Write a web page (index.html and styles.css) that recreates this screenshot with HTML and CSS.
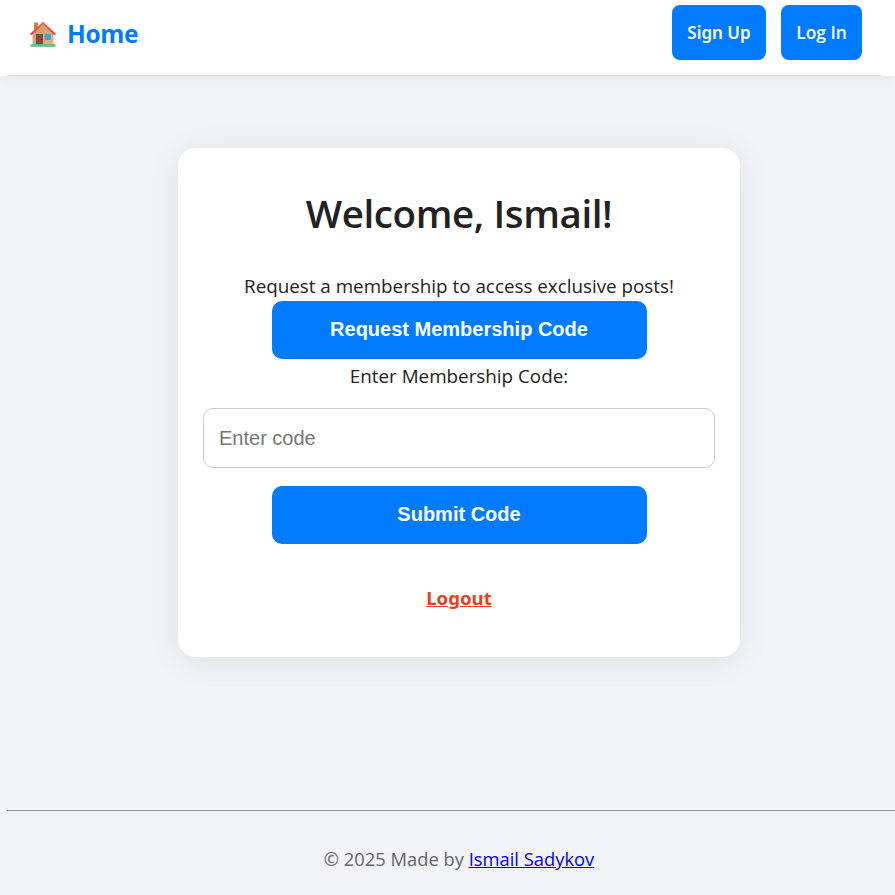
FILE: index.html
```html
<!DOCTYPE html>
<html lang="en">
<head>
<meta charset="utf-8">
<title>Members</title>
<link rel="stylesheet" href="styles.css">
</head>
<body>
<header class="header">
  <nav class="nav">
    <a class="home" href="#">
      <svg class="house" viewBox="0 0 28 28" aria-hidden="true">
        <defs>
          <linearGradient id="wall" x1="0" y1="0" x2="1" y2="1"><stop offset="0" stop-color="#c99566"/><stop offset="1" stop-color="#e7b184"/></linearGradient>
          <linearGradient id="roof" x1="0" y1="0" x2="0" y2="1"><stop offset="0" stop-color="#ff7044"/><stop offset="1" stop-color="#df3d3f"/></linearGradient>
        </defs>
        <path d="M5 2.500h4v10H5z" fill="#bd8652"/>
        <path d="M14 3.500 3.600 13v12h20.900V13z" fill="url(#wall)"/>
        <path d="M7 14h7v10.500H7z" fill="#795047"/>
        <circle cx="12.600" cy="19.500" r=".7" fill="#4e3434"/>
        <path d="M16 14h6v6h-6z" fill="#37a8e9"/>
        <path d="M2.300 14 14 3 25.700 14" fill="none" stroke="url(#roof)" stroke-width="2" stroke-linecap="round" stroke-linejoin="round"/>
        <rect x="1.400" y="24.200" width="25.200" height="2.500" rx="1" fill="#4cc488"/>
      </svg>
      <span class="home-text">Home</span>
    </a>
    <div class="actions">
      <a class="nav-button signup" href="#">Sign Up</a>
      <a class="nav-button login" href="#">Log In</a>
    </div>
  </nav>
  <div class="header-rule"></div>
</header>
<main class="card">
  <h1 class="title"><span>Welcome, Ismail!</span></h1>
  <p class="intro">Request a membership to access exclusive posts!</p>
  <button class="button">Request Membership Code</button>
  <form class="form">
    <label class="label" for="code">Enter Membership Code:</label>
    <input class="input" id="code" type="text" placeholder="Enter code">
    <button class="button" type="button">Submit Code</button>
  </form>
  <a class="logout" href="#">Logout</a>
</main>
<footer class="footer">
  <p class="credit">© 2025 Made by <a href="#">Ismail Sadykov</a></p>
</footer>
</body>
</html>
```
FILE: styles.css
```css
* { box-sizing: border-box; }
html, body { height: 100%; }
body {
  margin: 0;
  display: flex;
  flex-direction: column;
  overflow: hidden;
  background: #f2f3f7;
  color: #222;
  font-family: "Segoe UI", "Open Sans", sans-serif;
  font-size: 18.820px;
}
h1, p { margin: 0; }
.header {
  flex: none;
  height: 76px;
  background: #fff;
  box-shadow: 0 2px 12px rgba(0, 0, 0, .06);
}
.nav {
  height: 75px;
  padding: 5px 33px 0 29px;
  display: flex;
  justify-content: space-between;
}
.home {
  height: 57px;
  display: flex;
  align-items: center;
  color: #007bff;
  text-decoration: none;
  font-size: 24.500px;
  font-weight: 700;
  letter-spacing: -.3px;
}
.house { width: 28px; height: 28px; margin-right: 10px; }
.actions { display: flex; gap: 15px; }
.nav-button {
  height: 55px;
  border-radius: 8px;
  background: #007bff;
  color: #fff;
  font-size: 17.400px;
  font-weight: 600;
  line-height: 55px;
  text-align: center;
  text-decoration: none;
}
.signup { width: 94px; font-family: "Segoe UI", "Noto Sans", sans-serif; font-size: 17px; }
.login { width: 81px; }
.header-rule { height: 1px; margin: 0 14px 0 7px; background: #dededf; }
.card {
  flex: none;
  width: 562px;
  height: 509px;
  margin: 72px 0 0 178px;
  padding: 36px 25px 0;
  display: flex;
  flex-direction: column;
  align-items: center;
  border-radius: 18px;
  background: #fff;
  box-shadow: 0 4px 32px rgba(0, 0, 0, .08);
}
.title { height: 88px; font-size: 38.500px; font-weight: 600; line-height: 58px; letter-spacing: -.4px; }
.intro { height: 29px; line-height: 28px; }
.button {
  width: 375px;
  height: 58px;
  flex: none;
  padding: 0 0 2px;
  border: 0;
  border-radius: 10px;
  background: #007bff;
  color: #fff;
  font: 700 20px "Liberation Sans", sans-serif;
}
.form { width: 100%; display: flex; flex-direction: column; align-items: center; }
.label { height: 49px; line-height: 34px; }
.input {
  width: 100%;
  height: 60px;
  margin-bottom: 18px;
  padding: 0 15px;
  border: 1px solid #ccc;
  border-radius: 10px;
  background: #fff;
  font: 20px "Liberation Sans", sans-serif;
}
.input::placeholder { color: #757575; }
.logout {
  margin-top: 40px;
  color: #e64119;
  font-family: "Segoe UI", "Noto Sans", sans-serif;
  font-size: 18.600px;
  font-weight: 700;
  line-height: 28px;
}
.footer {
  flex: 1;
  margin: 153px 0 0 7px;
  padding-top: 34px;
  border-top: 1px solid #999;
  box-shadow: inset 0 1px #ebecef;
  text-align: center;
  color: #666;
}
.credit { line-height: 27px; padding-left: 16px; font-size: 18.350px; }
.credit a { color: #0000ee; }
```
